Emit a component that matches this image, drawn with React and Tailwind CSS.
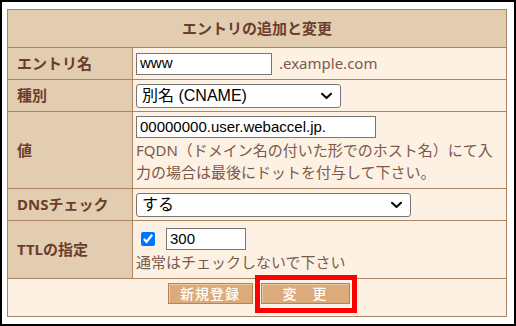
import React from "react";

const labelCls =
  "w-[125px] shrink-0 bg-[#e3cdb0] border-r border-[#a98566] flex items-center pl-[9px] text-[15px] font-bold text-[#6c3d2e]";
const valueCls = "flex-1 bg-[#fdf1e4] pl-[3px] text-[15px] text-[#7b5a4b]";
const inputCls =
  "bg-white border border-[#767676] outline-none px-[3px] text-[15px] text-black [font-family:'Liberation_Sans','Noto_Sans_CJK_JP',sans-serif]";

function Chevron() {
  return (
    <svg width="11" height="7" viewBox="0 0 11 7" className="pointer-events-none absolute right-[9px] top-1/2 -translate-y-1/2">
      <path d="M1 1.2 L5.5 5.5 L10 1.2" fill="none" stroke="#111" strokeWidth="2.2" strokeLinecap="round" strokeLinejoin="round" />
    </svg>
  );
}

function Select({ width, value }) {
  return (
    <div className="relative" style={{ width }}>
      <select
        defaultValue={value}
        className="appearance-none w-full h-[24px] bg-white border border-[#767676] rounded-[3px] pl-[5px] text-[16px] text-black leading-none outline-none [font-family:'Liberation_Sans','Noto_Sans_CJK_JP',sans-serif]"
      >
        <option>{value}</option>
      </select>
      <Chevron />
    </div>
  );
}

export default function App() {
  return (
    <div className="w-[516px] h-[326px] bg-white border-2 border-black pl-[5px] pt-[7px] [font-family:'Noto_Sans','Noto_Sans_CJK_JP',sans-serif]">
      <div className="w-[500px] border border-[#a98566]">
        <div className="h-[38px] border-b border-[#a98566] bg-[#e3cdb0] flex items-center justify-center text-[15px] font-bold text-[#6c3d2e]">
          エントリの追加と変更
        </div>

        <div className="h-[32px] border-b border-[#a98566] flex">
          <div className={labelCls}>エントリ名</div>
          <div className={valueCls + " flex items-center"}>
            <input defaultValue="www" className={inputCls + " w-[136px] h-[22px]"} />
            <span className="ml-[7px]">.example.com</span>
          </div>
        </div>

        <div className="h-[32px] border-b border-[#a98566] flex">
          <div className={labelCls}>種別</div>
          <div className={valueCls + " flex items-center"}>
            <Select width="205px" value="別名 (CNAME)" />
          </div>
        </div>

        <div className="h-[77px] border-b border-[#a98566] flex">
          <div className={labelCls}>値</div>
          <div className={valueCls + " pt-[4px]"}>
            <input defaultValue="00000000.user.webaccel.jp." className={inputCls + " w-[240px] h-[22px] block"} />
            <div className="leading-[22px] mt-[1px]">
              FQDN（ドメイン名の付いた形でのホスト名）にて入
              <br />
              力の場合は最後にドットを付与して下さい。
            </div>
          </div>
        </div>

        <div className="h-[32px] border-b border-[#a98566] flex">
          <div className={labelCls}>DNSチェック</div>
          <div className={valueCls + " flex items-center"}>
            <Select width="275px" value="する" />
          </div>
        </div>

        <div className="h-[58px] border-b border-[#a98566] flex">
          <div className={labelCls}>TTLの指定</div>
          <div className={valueCls + " pt-[7px]"}>
            <div className="flex items-center h-[22px]">
              <input type="checkbox" defaultChecked className="w-[14px] h-[14px] ml-[5px] accent-[#0075ff]" />
              <input defaultValue="300" className={inputCls + " w-[80px] h-[22px] ml-[11px]"} />
            </div>
            <div className="leading-[22px] mt-[1px]">通常はチェックしないで下さい</div>
          </div>
        </div>

        <div className="h-[37px] bg-[#fdf1e4] flex items-start justify-center gap-[8px] pl-[3px] pt-[4px]">
          <button className="w-[85px] h-[21px] bg-[#dbab7b] border border-[#b7834f] text-white text-[14px] font-medium tracking-[1px] leading-none shadow-[inset_1px_1px_0_#ecc9a2]">
            新規登録
          </button>
          <span className="relative">
            <button className="w-[89px] h-[21px] bg-[#dbab7b] border border-[#b7834f] text-white text-[14px] font-medium tracking-[1px] leading-none shadow-[inset_1px_1px_0_#ecc9a2] block">
              変　更
            </button>
            <span className="absolute left-[-6px] right-[-7px] top-[-8px] bottom-[-9px] border-[5px] border-[#ff0000] shadow-[inset_0_0_0_1px_#fff]" />
          </span>
        </div>
      </div>
    </div>
  );
}
